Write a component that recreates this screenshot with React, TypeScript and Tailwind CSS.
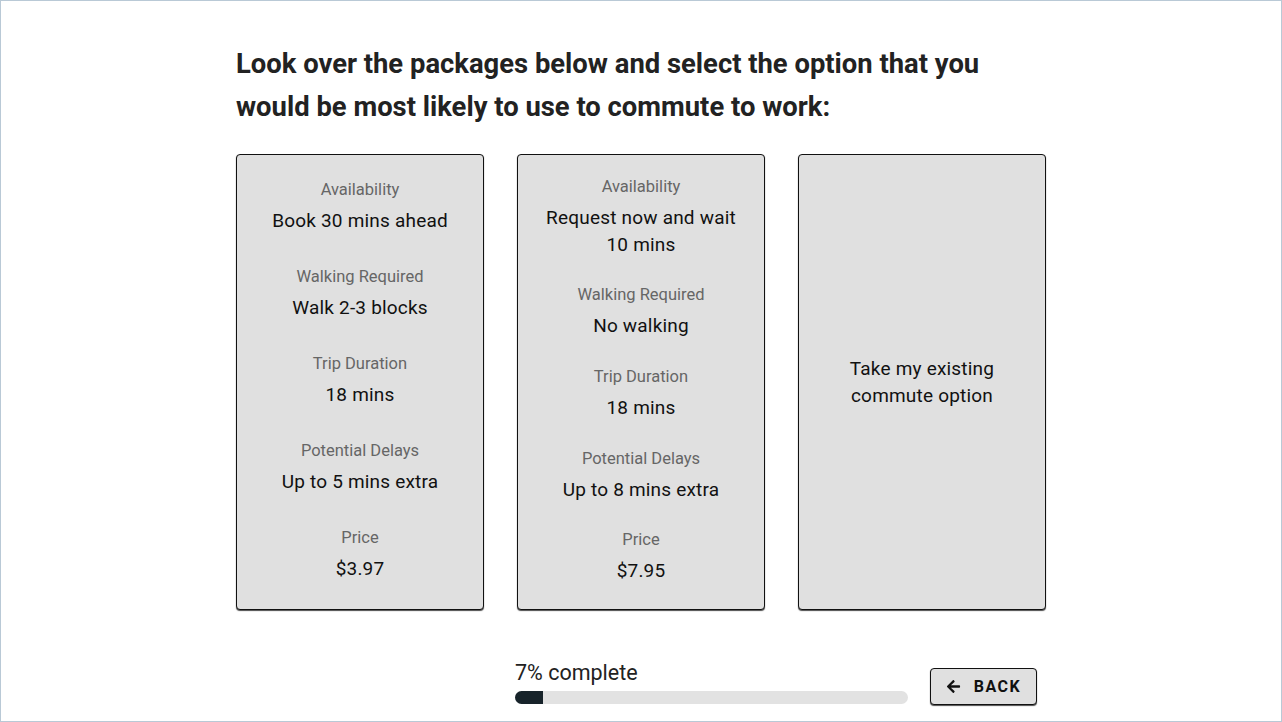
import { FaArrowLeft } from "react-icons/fa";

type Field = { label: string; value: string };

const packages: Field[][] = [
  [
    { label: "Availability", value: "Book 30 mins ahead" },
    { label: "Walking Required", value: "Walk 2-3 blocks" },
    { label: "Trip Duration", value: "18 mins" },
    { label: "Potential Delays", value: "Up to 5 mins extra" },
    { label: "Price", value: "$3.97" },
  ],
  [
    { label: "Availability", value: "Request now and wait 10 mins" },
    { label: "Walking Required", value: "No walking" },
    { label: "Trip Duration", value: "18 mins" },
    { label: "Potential Delays", value: "Up to 8 mins extra" },
    { label: "Price", value: "$7.95" },
  ],
];

function PackageCard({ fields }: { fields: Field[] }) {
  return (
    <button className="flex flex-col justify-around h-[456px] rounded-[4px] border border-[#111111] bg-[#e0e0e0] px-6 pt-[7px] pb-[12px] text-center shadow-[0_1px_1px_rgba(0,0,0,0.7)]">
      {fields.map((f) => (
        <div key={f.label} className="flex flex-col">
          <span className="text-[16.5px] leading-[24px] text-[#666666]">{f.label}</span>
          <span className="mt-[5px] text-[19px] leading-[27px] tracking-[0.2px] text-[#111111]">{f.value}</span>
        </div>
      ))}
    </button>
  );
}

export default function App() {
  return (
    <div className="h-[722px] border border-[#b9c9d6] bg-white font-['Roboto',sans-serif]">
      <div className="mx-auto w-[810px] pt-[42px]">
        <h1 className="w-[770px] text-[27.4px] font-bold leading-[43px] text-[#222222]">
          Look over the packages below and select the option that you would be most likely to use to commute to
          work:
        </h1>

        <div className="mt-[25px] grid grid-cols-3 gap-[33px]">
          {packages.map((p, i) => (
            <PackageCard key={i} fields={p} />
          ))}
          <button className="flex h-[456px] items-center justify-center rounded-[4px] border border-[#111111] bg-[#e0e0e0] px-12 text-center text-[19px] leading-[27px] tracking-[0.2px] text-[#111111] shadow-[0_1px_1px_rgba(0,0,0,0.7)]">
            Take my existing commute option
          </button>
        </div>

        <div className="mt-[49px] flex items-end pl-[279px]">
          <div className="w-[393px]">
            <div className="text-[21.5px] leading-[28px] text-[#222222]">7% complete</div>
            <div className="mt-[4px] h-[13px] rounded-full bg-[#e2e2e2]">
              <div className="h-full w-[28px] rounded-l-full bg-[#17232a]" />
            </div>
          </div>
          <button className="mb-[-1px] ml-[22px] flex h-[37px] w-[107px] items-center justify-center gap-[13px] rounded-[4px] border border-[#111111] bg-[#e0e0e0] text-[16px] font-bold tracking-[1.5px] text-[#111111] shadow-[0_1px_1px_rgba(0,0,0,0.7)]">
            <FaArrowLeft className="h-[15px] w-[15px]" />
            BACK
          </button>
        </div>
      </div>
    </div>
  );
}
